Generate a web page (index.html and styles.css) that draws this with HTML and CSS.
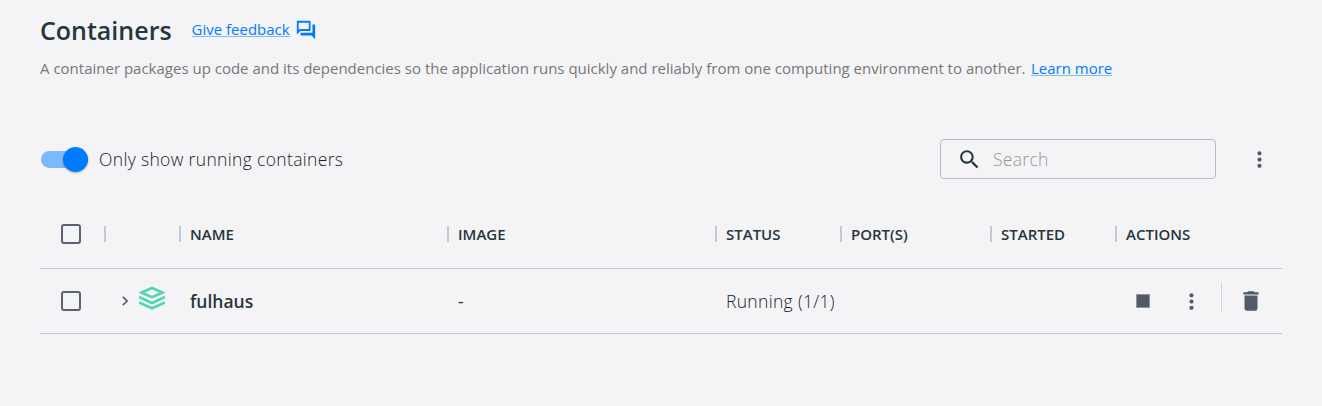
FILE: index.html
```html
<!DOCTYPE html>
<html lang="en">
<head>
<meta charset="utf-8">
<title>Containers</title>
<link rel="stylesheet" href="styles.css">
</head>
<body>
<main class="page">
  <header class="heading">
    <h1 class="title">Containers</h1>
    <a class="link feedback">Give feedback</a>
    <svg class="feedback-icon" viewBox="0 0 24 24"><path d="M15 4v7H5.17L4 12.17V4h11m1-2H3c-.55 0-1 .45-1 1v14l4-4h10c.55 0 1-.45 1-1V3c0-.55-.45-1-1-1zm5 4h-2v9H6v2c0 .55.45 1 1 1h11l4 4V7c0-.55-.45-1-1-1z"/></svg>
  </header>
  <p class="intro"><span class="intro-text">A container packages up code and its dependencies so the application runs quickly and reliably from one computing environment to another.</span><a class="link learn">Learn more</a></p>
  <section class="toolbar">
    <span class="switch"><span class="knob"></span></span>
    <span class="switch-label">Only show running containers</span>
    <div class="search">
      <svg class="search-icon" viewBox="0 0 24 24"><path d="M15.5 14h-.79l-.28-.27C15.41 12.59 16 11.11 16 9.5 16 5.91 13.09 3 9.5 3S3 5.91 3 9.5 5.91 16 9.5 16c1.61 0 3.09-.59 4.23-1.57l.27.28v.79l5 4.99L20.49 19l-4.99-5zm-6 0C7.01 14 5 11.99 5 9.5S7.01 5 9.5 5 14 7.01 14 9.5 11.99 14 9.5 14z"/></svg>
      <span class="search-text">Search</span>
    </div>
    <svg class="dots" viewBox="0 0 24 24"><path d="M12 8c1.1 0 2-.9 2-2s-.9-2-2-2-2 .9-2 2 .9 2 2 2zm0 2c-1.1 0-2 .9-2 2s.9 2 2 2 2-.9 2-2-.9-2-2-2zm0 6c-1.1 0-2 .9-2 2s.9 2 2 2 2-.9 2-2-.9-2-2-2z"/></svg>
  </section>
  <section class="table">
    <div class="row head">
      <div class="check-cell"><span class="checkbox"></span></div>
      <div class="cell"></div>
      <div class="cell">NAME</div>
      <div class="cell">IMAGE</div>
      <div class="cell">STATUS</div>
      <div class="cell">PORT(S)</div>
      <div class="cell">STARTED</div>
      <div class="cell">ACTIONS</div>
    </div>
    <div class="row item">
      <div class="check-cell"><span class="checkbox"></span></div>
      <div class="expand">
        <svg class="chevron" viewBox="0 0 6 10"><path d="M.8.8 5 5 .8 9.2"/></svg>
        <svg class="stack" viewBox="0 0 26 24"><path d="M13 1.900 23.500 6.600 13 11.300 2.500 6.600z"/><path d="M0 11.100 13 17l13-5.900M0 16.400 13 22.300l13-5.900"/></svg>
      </div>
      <div class="cell name">fulhaus</div>
      <div class="cell">-</div>
      <div class="cell status">Running (1/1)</div>
      <div class="cell"></div>
      <div class="cell"></div>
      <div class="actions">
        <span class="stop"></span>
        <svg class="dots" viewBox="0 0 24 24"><path d="M12 8c1.1 0 2-.9 2-2s-.9-2-2-2-2 .9-2 2 .9 2 2 2zm0 2c-1.1 0-2 .9-2 2s.9 2 2 2 2-.9 2-2-.9-2-2-2zm0 6c-1.1 0-2 .9-2 2s.9 2 2 2 2-.9 2-2-.9-2-2-2z"/></svg>
        <span class="divider"></span>
        <svg class="trash" viewBox="0 0 24 24"><path d="M6 19c0 1.100.9 2 2 2h8c1.100 0 2-.9 2-2V7H6v12zM19 4h-3.500l-1-1h-5l-1 1H5v2h14V4z"/></svg>
      </div>
    </div>
  </section>
</main>
</body>
</html>
```
FILE: styles.css
```css
* { box-sizing: border-box; }
body {
  margin: 0;
  background: #f4f4f6;
  color: #27353d;
  font-family: "Open Sans", sans-serif;
}
svg { display: block; flex: none; }
.page { padding: 10px 40px 0; height: 406px; }
.heading { display: flex; align-items: center; height: 40px; }
.title { margin: 0; width: 151.5px; font-size: 25px; font-weight: 600; line-height: 40px; white-space: nowrap; }
.link {
  color: #007bff;
  font-size: 15px;
  line-height: 14px;
  border-bottom: 1px solid #80bbfa;
  white-space: nowrap;
}
.feedback { margin-bottom: 2px; }
.feedback-icon { width: 22px; height: 22px; margin: 0 0 1px 5px; fill: #007bff; }
.intro { display: flex; align-items: center; margin: 7px 0 0; height: 23px; font-size: 15px; color: #777; white-space: nowrap; }
.intro-text { width: 991px; line-height: 20px; margin-bottom: 1px; }
.toolbar { display: flex; align-items: center; height: 40px; margin-top: 59px; }
.switch { display: flex; align-items: center; justify-content: flex-end; width: 47px; height: 17px; margin-left: 1px; border-radius: 9px; background: #7bb8fc; }
.knob { width: 25px; height: 25px; border-radius: 50%; background: #007bff; box-shadow: 0 1px 2px rgba(0,0,0,.3); }
.switch-label { margin-left: 11px; font-size: 17.5px; font-weight: 300; letter-spacing: .34px; color: #17252d; white-space: nowrap; }
.search { display: flex; align-items: center; width: 276px; height: 40px; margin-left: auto; padding-left: 16px; border: 1px solid #b9bcc1; border-radius: 4px; }
.search-icon { width: 25px; height: 25px; fill: #27353d; }
.search-text { margin-left: 11px; font-size: 17.5px; font-weight: 300; letter-spacing: .3px; color: #92979c; }
.dots { width: 25px; height: 25px; fill: #505a69; }
.toolbar .dots { margin: 0 10.500px 0 30.500px; }
.table { margin-top: 21px; }
.row { display: grid; grid-template-columns: 64px 75px 268px 268px 125px 150px 125px 167px; align-items: center; border-bottom: 1px solid #c4c7d0; }
.head { height: 69px; font-size: 15px; font-weight: 600; }
.item { height: 65px; font-size: 17.5px; }
.check-cell { padding-left: 21px; }
.checkbox { display: block; width: 20px; height: 20px; border: 2px solid #596473; border-radius: 3px; }
.cell { padding-left: 11px; white-space: nowrap; }
.head .cell { height: 16px; padding-left: 9px; line-height: 17px; border-left: 2px solid #c4c9d1; }
.name { font-weight: 600; }
.status { font-weight: 300; letter-spacing: .32px; color: #17252d; }
.expand { display: flex; align-items: center; padding-left: 18px; }
.chevron { width: 6px; height: 10px; fill: none; stroke: #505a69; stroke-width: 1.6; }
.stack { width: 26px; height: 24px; margin: 0 0 6px 11px; fill: none; stroke: #54d5b0; stroke-width: 2.7; }
.actions { display: flex; align-items: center; padding-left: 21px; }
.stop { width: 14px; height: 14px; background: #505a69; border: 1px solid #8f96a1; }
.actions .dots { margin-left: 29px; }
.divider { width: 1px; height: 30px; margin: 0 16px 8px 17px; background: #d3d6db; }
.trash { width: 26px; height: 26px; fill: #505a69; }
```
